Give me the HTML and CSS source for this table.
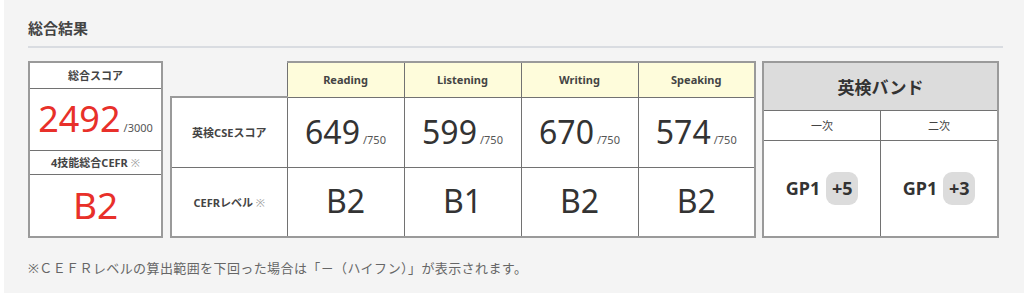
FILE: index.html
```html
<!DOCTYPE html>
<html lang="ja">
<head>
<meta charset="utf-8">
<link rel="stylesheet" href="styles.css">
</head>
<body>
<div class="page">
  <h2 class="title">総合結果</h2>
  <div class="boards">
    <table class="box total">
      <tr class="r-head"><th>総合スコア</th></tr>
      <tr class="r-score"><td><span class="big red">2492</span><span class="of">/3000</span></td></tr>
      <tr class="r-sub"><th>4技能総合CEFR <span class="mark">※</span></th></tr>
      <tr class="r-cefr"><td><span class="big red">B2</span></td></tr>
    </table>
    <table class="box skills">
      <tr class="s-head">
        <th class="blank"></th>
        <th class="skill">Reading</th>
        <th class="skill">Listening</th>
        <th class="skill">Writing</th>
        <th class="skill">Speaking</th>
      </tr>
      <tr class="s-row">
        <th class="label">英検CSEスコア</th>
        <td><span class="num">649</span><span class="of">/750</span></td>
        <td><span class="num">599</span><span class="of">/750</span></td>
        <td><span class="num">670</span><span class="of">/750</span></td>
        <td><span class="num">574</span><span class="of">/750</span></td>
      </tr>
      <tr class="s-row">
        <th class="label">CEFRレベル <span class="mark">※</span></th>
        <td><span class="num">B2</span></td>
        <td><span class="num">B1</span></td>
        <td><span class="num">B2</span></td>
        <td><span class="num">B2</span></td>
      </tr>
    </table>
    <table class="box band">
      <tr class="b-head"><th colspan="2">英検バンド</th></tr>
      <tr class="b-sub"><th>一次</th><th>二次</th></tr>
      <tr class="b-val">
        <td><span class="gp">GP1</span><span class="pill">+5</span></td>
        <td><span class="gp">GP1</span><span class="pill">+3</span></td>
      </tr>
    </table>
  </div>
  <p class="note">※ＣＥＦＲレベルの算出範囲を下回った場合は「－（ハイフン）」が表示されます。</p>
</div>
</body>
</html>
```

FILE: styles.css
```css
* { box-sizing: border-box; }
html, body { margin: 0; padding: 0; background: #ffffff; }
body {
  font-family: "Noto Sans", "Noto Sans CJK JP", sans-serif;
  color: #333333;
}
.page {
  margin-left: 4px;
  height: 293px;
  background: #f4f4f4;
  padding: 17px 21px 0 24px;
}
.title {
  margin: 0;
  font-size: 15px;
  font-weight: 700;
  color: #444444;
  line-height: 22px;
  padding-bottom: 7px;
  border-bottom: 2px solid #d9dce1;
}
.boards {
  display: flex;
  align-items: flex-start;
  margin-top: 13px;
}
.box {
  border-collapse: collapse;
  table-layout: fixed;
  background: #ffffff;
}
.box th, .box td {
  border: 1px solid #727272;
  padding: 0;
  text-align: center;
  vertical-align: middle;
}
.box th { font-size: 11px; font-weight: 700; color: #444444; }
.mark { color: #a0a0a0; font-weight: 400; }

/* total */
.total { width: 135px; border: 2px solid #9a9a9a; }
.total tr > * { border-left: 2px solid #9a9a9a; border-right: 2px solid #9a9a9a; }
.r-head { height: 26px; }
.r-score { height: 62px; }
.r-sub { height: 24px; }
.r-cefr { height: 63px; }
.r-head th { border-top: 2px solid #9a9a9a; }
.r-cefr td { border-bottom: 2px solid #9a9a9a; }
.big { font-size: 36px; font-weight: 400; line-height: 1; }
.r-cefr .big { font-size: 37px; }
.red { color: #e8302a; }
.of { font-size: 11px; color: #555555; margin-left: 3px; }

/* skills */
.skills { width: 586px; background: transparent; margin-left: 7px; }
.s-head { height: 35px; }
.s-row { height: 70px; }
.skills .blank { border: none; border-bottom: 2px solid #9a9a9a; background: transparent; width: 116px; }
.skills .skill { background: #fefcdb; border-top: 2px solid #9a9a9a; width: 117px; }
.skills .s-head .skill:last-child, .skills .s-row > *:last-child { border-right: 2px solid #9a9a9a; }
.skills .label { border-left: 2px solid #9a9a9a; background: #ffffff; }
.skills .s-row td { background: #ffffff; }
.skills .s-row:last-child > * { border-bottom: 2px solid #9a9a9a; }
.num { font-size: 32px; font-weight: 400; color: #333333; line-height: 1; }

/* band */
.band { width: 237px; border: 2px solid #9a9a9a; margin-left: 6px; }
.b-head { height: 48px; }
.b-sub { height: 30px; }
.b-val { height: 97px; }
.b-head th { background: #dcdcdc; font-size: 17px; color: #333333; border: 2px solid #9a9a9a; border-bottom: 1px solid #727272; }
.b-sub th { font-weight: 400; font-size: 11px; color: #444444; width: 118px; }
.b-sub th:first-child, .b-val td:first-child { border-left: 2px solid #9a9a9a; }
.b-sub th:last-child, .b-val td:last-child { border-right: 2px solid #9a9a9a; }
.b-val td { border-bottom: 2px solid #9a9a9a; }
.gp { font-size: 18px; font-weight: 700; color: #333333; }
.pill {
  display: inline-block;
  margin-left: 6px;
  width: 32px;
  height: 33px;
  line-height: 33px;
  border-radius: 9px;
  background: #dcdcdc;
  font-size: 18px;
  font-weight: 700;
  color: #333333;
}
.note {
  margin: 20px 0 0;
  font-size: 13px;
  letter-spacing: 0.4px;
  color: #666666;
}
```
